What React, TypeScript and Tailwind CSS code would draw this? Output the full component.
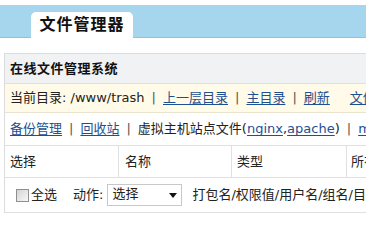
const FONT = { fontFamily: '"DejaVu Sans", "Noto Sans CJK SC", sans-serif' };

function Sep() {
  return <span className="mx-[7px] text-[#555]">|</span>;
}

function A({ children }: { children: React.ReactNode }) {
  return (
    <a href="#" className="text-[#1d4f91] underline underline-offset-2">
      {children}
    </a>
  );
}

export default function App() {
  return (
    <div
      className="w-[366px] h-[223px] overflow-hidden bg-white text-[13px] text-[#222]"
      style={FONT}
    >
      <div className="pt-[5px]">
        <div className="h-[33px] bg-[#a6d6ee] border-b border-[#8cc4e2] flex items-end">
          <div className="ml-[31px] w-[102px] h-[26px] -mb-px bg-white rounded-t-[5px] flex items-center justify-center font-bold text-[16px] tracking-[1px] text-[#111]">
            文件管理器
          </div>
        </div>
      </div>

      <div className="mt-[15px] ml-[4px] w-[600px] border-l border-t border-[#dcdcdc]">
        <div className="h-[30px] bg-[#f1f2f4] border-b border-[#e0e0e0] flex items-center pl-[5px] font-bold text-[13px] tracking-[0.5px] text-[#111]">
          在线文件管理系统
        </div>

        <div className="h-[29px] bg-[#fffbe8] border-b border-[#e8e4d0] flex items-center pl-[5px] whitespace-nowrap">
          <span>当前目录: /www/trash</span>
          <Sep />
          <A>上一层目录</A>
          <Sep />
          <A>主目录</A>
          <Sep />
          <A>刷新</A>
          <span className="ml-[20px]">
            <A>文件上传</A>
          </span>
        </div>

        <div className="h-[33px] border-b border-[#e0e0e0] flex items-center pl-[5px] whitespace-nowrap">
          <A>备份管理</A>
          <Sep />
          <A>回收站</A>
          <Sep />
          <span>
            虚拟主机站点文件(<A>nginx</A>,<A>apache</A>)
          </span>
          <Sep />
          <A>mysql</A>
        </div>

        <div className="h-[32px] border-b border-[#e0e0e0] flex whitespace-nowrap">
          <div className="w-[114px] border-r border-[#e0e0e0] flex items-center pl-[5px]">选择</div>
          <div className="w-[113px] border-r border-[#e0e0e0] flex items-center pl-[6px]">名称</div>
          <div className="w-[115px] border-r border-[#e0e0e0] flex items-center pl-[5px]">类型</div>
          <div className="flex-1 flex items-center pl-[4px]">所有者</div>
        </div>

        <div className="h-[35px] border-b border-[#e0e0e0] flex items-center whitespace-nowrap">
          <label className="ml-[11px] flex items-center">
            <span className="w-[13px] h-[13px] border border-[#8f8f8f] bg-gradient-to-br from-[#d4d4d4] to-[#f8f8f8] mr-[2px]" />
            全选
          </label>
          <span className="ml-[16px]">动作:</span>
          <div className="ml-[4px] w-[75px] h-[22px] border border-[#c8c8c8] bg-white flex items-center justify-between pl-[4px] pr-[3px]">
            <span className="-mt-[3px]">选择</span>
            <svg width="8" height="5" viewBox="0 0 8 5" className="mr-[1px]">
              <polygon points="0,0 8,0 4,5" fill="#111" />
            </svg>
          </div>
          <span className="ml-[10px]">打包名/权限值/用户名/组名/目录名</span>
        </div>
      </div>
    </div>
  );
}
